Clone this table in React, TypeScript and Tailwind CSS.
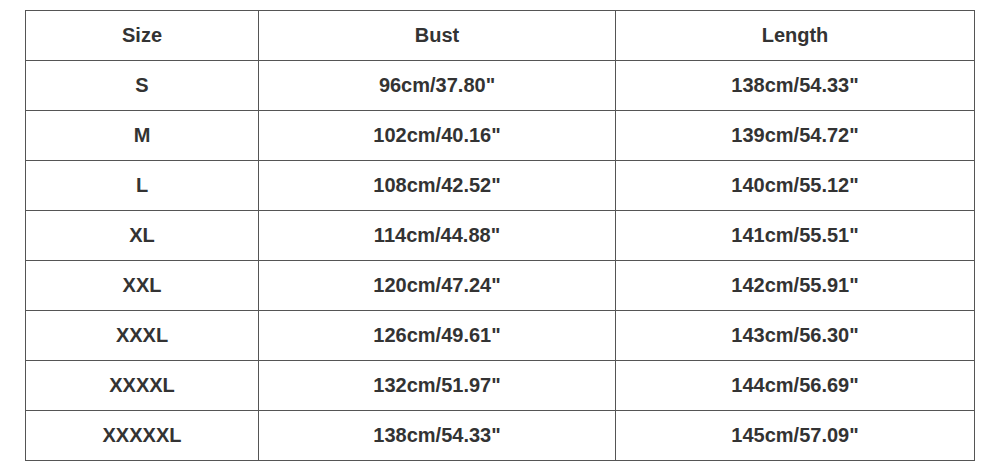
const rows = [
  ['Size', 'Bust', 'Length'],
  ['S', '96cm/37.80"', '138cm/54.33"'],
  ['M', '102cm/40.16"', '139cm/54.72"'],
  ['L', '108cm/42.52"', '140cm/55.12"'],
  ['XL', '114cm/44.88"', '141cm/55.51"'],
  ['XXL', '120cm/47.24"', '142cm/55.91"'],
  ['XXXL', '126cm/49.61"', '143cm/56.30"'],
  ['XXXXL', '132cm/51.97"', '144cm/56.69"'],
  ['XXXXXL', '138cm/54.33"', '145cm/57.09"'],
]

export default function App() {
  return (
    <div className="w-[1000px] h-[471px] bg-white pt-[10px] pl-[25px] font-['Liberation_Sans',Arial,sans-serif]">
      <div className="grid grid-cols-[233px_357px_359px] w-[950px] border-t border-l border-[#555]">
        {rows.map((row, i) =>
          row.map((cell, j) => (
            <div
              key={`${i}-${j}`}
              className="h-[50px] pb-[2px] flex items-center justify-center border-r border-b border-[#555] text-[20px] font-bold text-[#333]"
            >
              {cell}
            </div>
          ))
        )}
      </div>
    </div>
  )
}
